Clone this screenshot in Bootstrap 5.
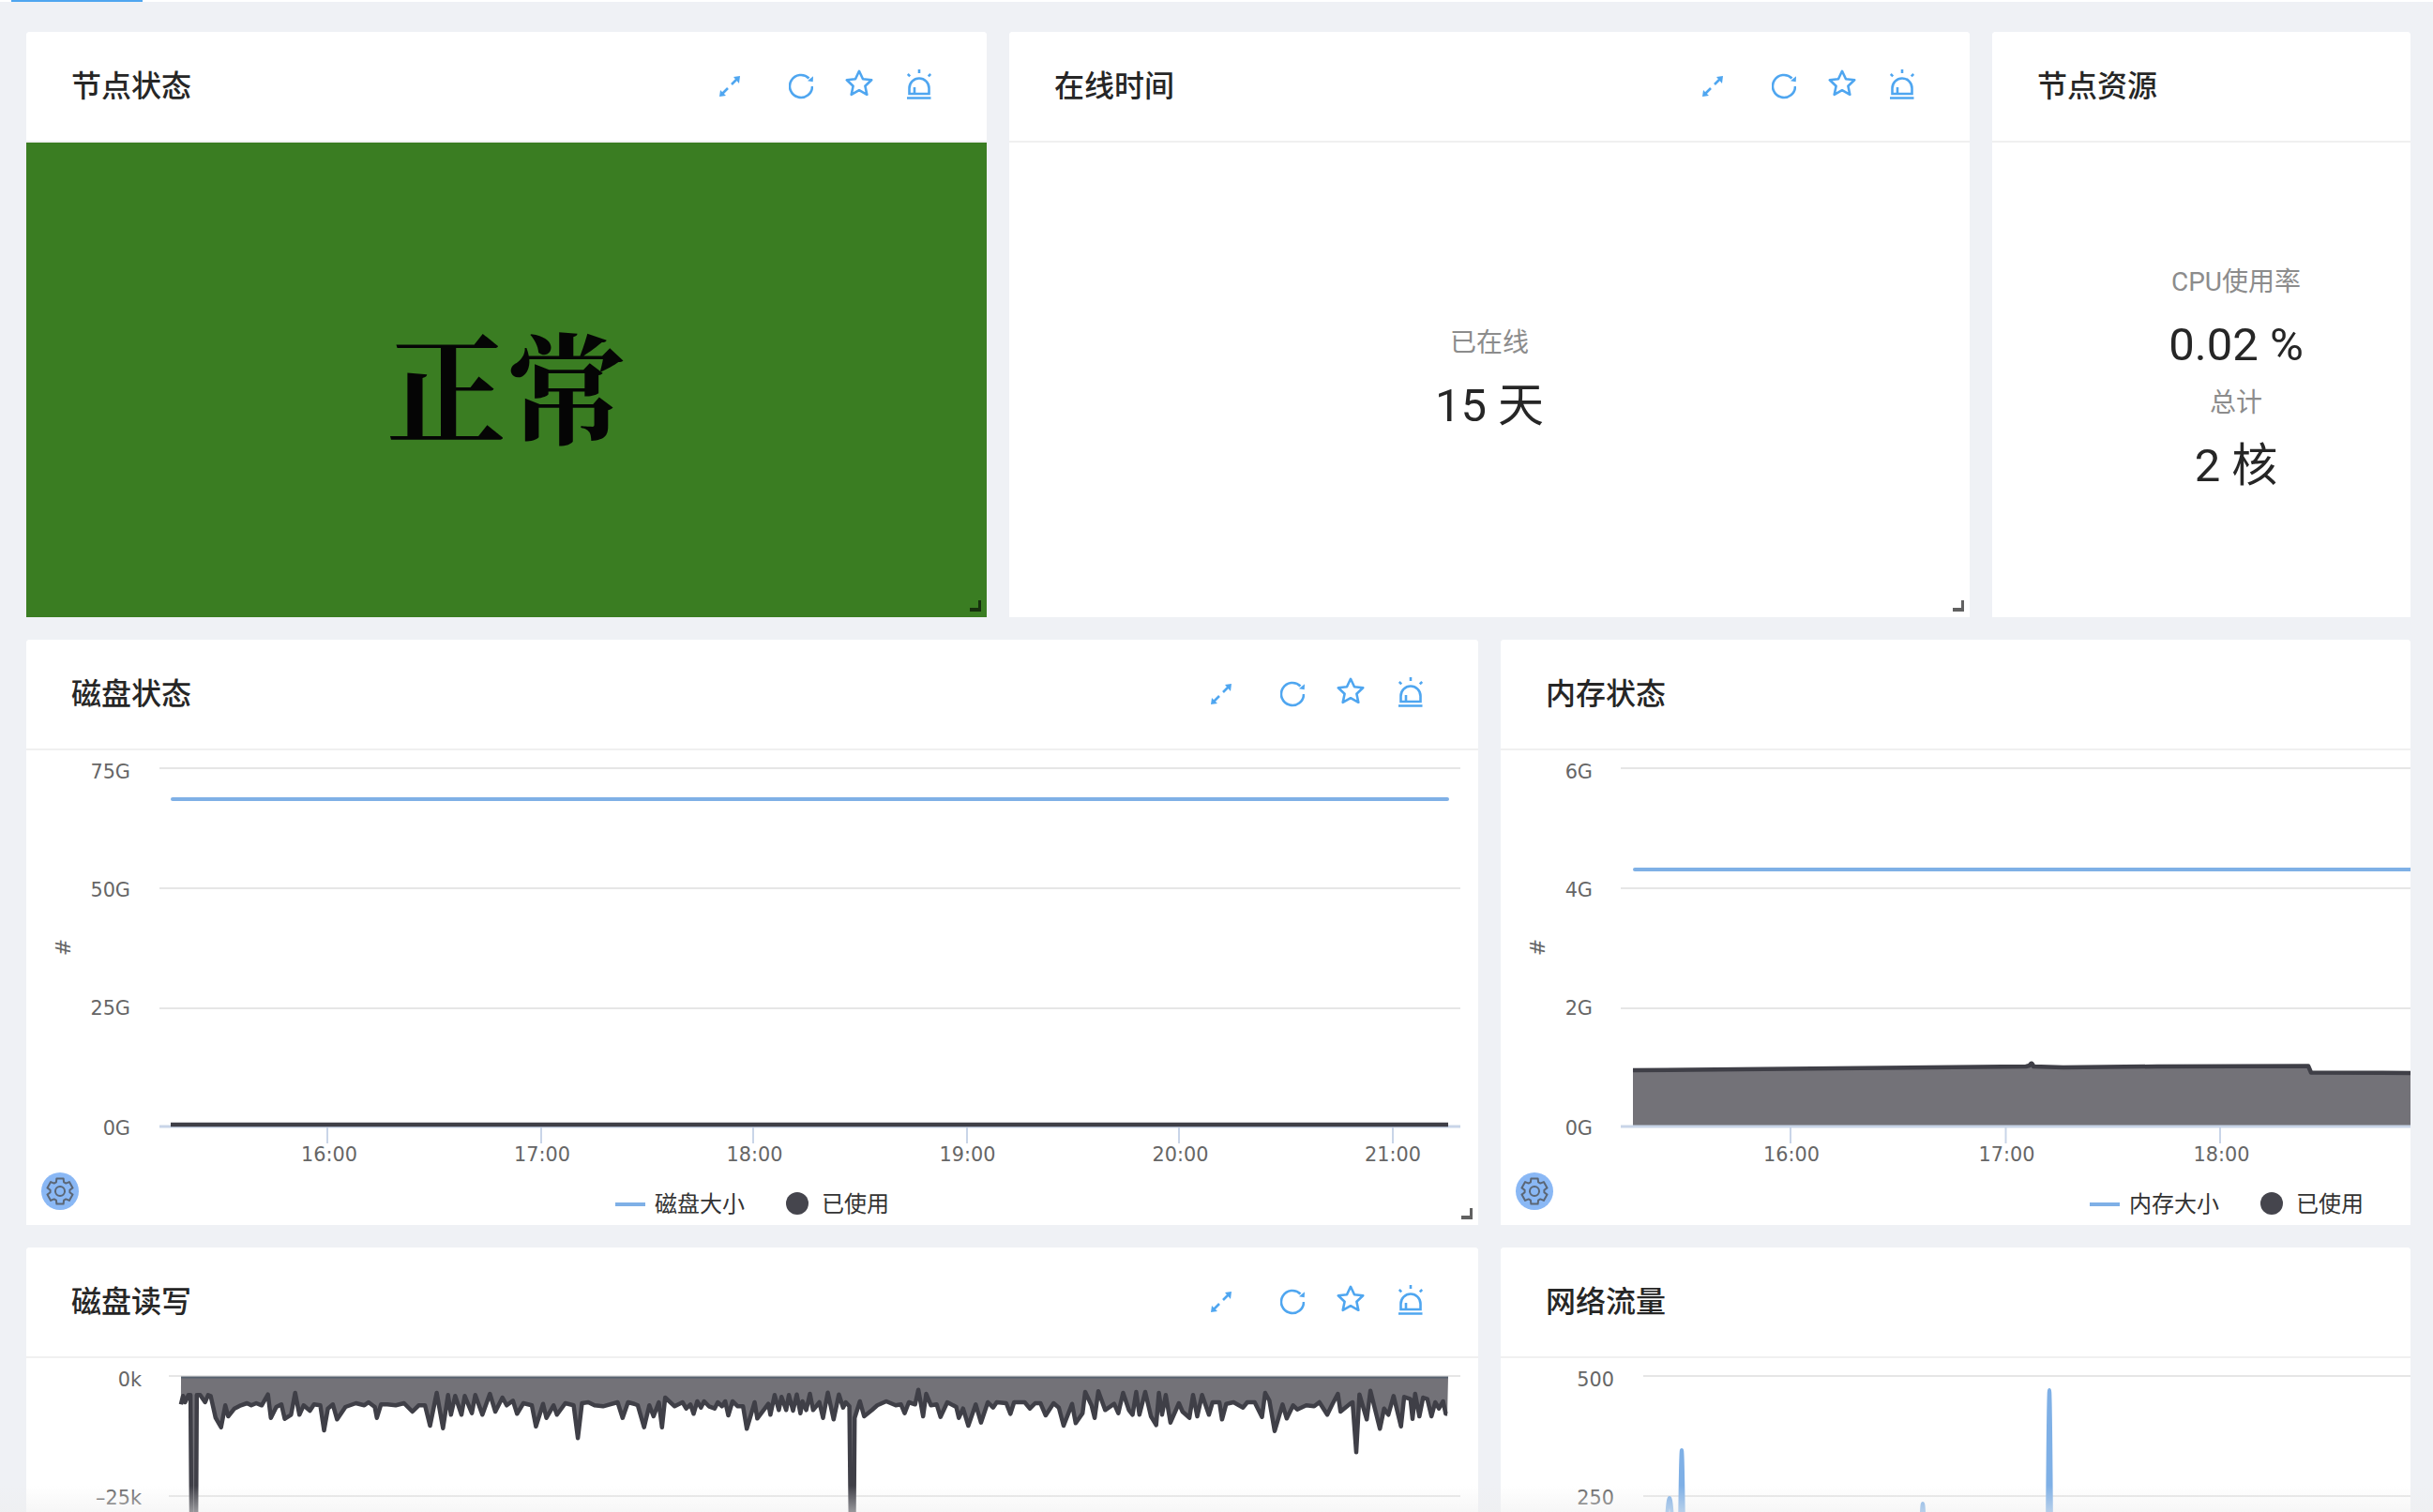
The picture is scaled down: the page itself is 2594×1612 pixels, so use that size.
<!DOCTYPE html>
<html lang="zh-CN">
<head>
    <meta charset="UTF-8">
    <meta name="viewport" content="width=device-width, initial-scale=1">
    <title>节点监控</title>
    <link href="https://cdn.jsdelivr.net/npm/bootstrap@5.3.0/dist/css/bootstrap.min.css" rel="stylesheet">
    <style>
        html, body {
            height: 100%;
            overflow: hidden;
        }

        body {
            background: #eff1f5;
            font-family: "Noto Sans CJK SC", sans-serif;
            color: #262626;
        }

        .top-strip {
            height: 2px;
            background: #fff;
        }

        .top-tab {
            width: 140px;
            height: 2px;
            margin-left: 12px;
            background: #4fa6f0;
        }

        .dash {
            padding: 32px 24px 0 28px;
            gap: 24px;
        }

        .dash-row {
            height: 624px;
            gap: 24px;
            flex: none;
        }

        .w-node { width: 1024px; }
        .w-res { width: 446px; }
        .w-disk { width: 1548px; }
        .w-mem { width: 970px; }

        .panel {
            --bs-card-border-radius: 4px 4px 0 0;
            --bs-card-inner-border-radius: 4px 4px 0 0;
            border: 0;
            overflow: hidden;
        }

        .panel-head {
            height: 118px;
            padding: 0 0 6px 48px;
            background: #fff;
            border-bottom: 2px solid #f0f0f0;
            flex: none;
        }

        .panel-title {
            font-size: 32px;
            font-weight: 500;
            color: #262626;
            margin: 0;
        }

        .tools {
            margin-right: 59px;
            margin-top: 2px;
        }

        .tools svg {
            height: 32px;
            display: block;
            fill: none;
            stroke: #4fa6f0;
            stroke-width: 2.6;
        }

        .tool-expand { width: 22px; margin-right: 52px; }
        .tool-refresh { width: 26px; margin-right: 34px; }
        .tool-star { width: 30px; margin-right: 36px; }
        .tool-alarm { width: 26px; }

        .status-ok {
            background: #3a7d22;
            color: #050505;
            font-family: "Noto Serif CJK SC", "Source Han Serif SC", "Liberation Serif", "Noto Sans CJK SC", serif;
            font-size: 128px;
            font-weight: 700;
            line-height: 1;
            padding-top: 8px;
        }

        .stat-body {
            padding-top: 6px;
        }

        .stat-body-res {
            padding-left: 74px;
        }

        .stat-label {
            font-family: Roboto, "Noto Sans CJK SC", sans-serif;
            font-size: 28px;
            line-height: 44px;
            color: #8c8c8c;
        }

        .stat-value {
            font-family: Roboto, "Noto Sans CJK SC", sans-serif;
            font-size: 49px;
            line-height: 80px;
            color: #262626;
        }

        .gap-label {
            margin-bottom: 5px;
        }

        .resize-mark {
            position: absolute;
            right: 6px;
            bottom: 6px;
            width: 12px;
            height: 12px;
            border-right: 3px solid rgba(0, 0, 0, .62);
            border-bottom: 4px solid rgba(0, 0, 0, .62);
        }

        .chart {
            display: block;
        }

        .chart text {
            font-family: "DejaVu Sans", sans-serif;
            font-size: 20.8px;
            fill: #666;
        }

        .chart .axis-name {
            font-size: 22px;
        }

        .chart .legend-text {
            font-family: "Noto Sans CJK SC", sans-serif;
            font-size: 24px;
            fill: #333;
        }

        .grid-line { stroke: #e6e6e6; stroke-width: 2; }
        .axis-line { stroke: #c9d5e8; stroke-width: 3; }
        .tick-line { stroke: #c9d5e8; stroke-width: 2; }
        .line-blue { stroke: #7fb0e6; stroke-width: 4; fill: none; stroke-linecap: round; stroke-linejoin: round; }
        .line-dark { stroke: #3f3f47; stroke-width: 4.5; fill: none; stroke-linejoin: round; }
        .area-dark { fill: #737278; }
        .gear-bg { fill: #8ab8f5; }
        .gear-line { fill: none; stroke: #5b6675; stroke-width: 2; stroke-linejoin: round; }

        .bottom-fade {
            position: absolute;
            left: 0;
            right: 0;
            bottom: 0;
            height: 28px;
            background: linear-gradient(rgba(238, 238, 238, 0), rgba(238, 238, 238, .5));
            pointer-events: none;
        }
    </style>
</head>
<body class="position-relative">

<svg width="0" height="0" class="position-absolute">
    <symbol id="i-expand" viewBox="0 -7 22 32">
        <path d="M13 9l6-6M9 13l-6 6"/>
        <path d="M22 0l-7 1 6 7zM0 22l1-7 6 6z" fill="#4fa6f0" stroke="none"/>
    </symbol>
    <symbol id="i-refresh" viewBox="0 -5 26 32">
        <path d="M25 13A12 12 0 1 1 21.5 4.5"/>
        <path d="M26 2.3l-.3 6-5.7-1z" fill="#4fa6f0" stroke="none"/>
    </symbol>
    <symbol id="i-star" viewBox="0 0 30 32">
        <path d="M15 1.8l4 8.4 9.2 1.1-6.8 6.4 1.9 9.1-8.300-4.600-8.300 4.600 1.900-9.100-6.800-6.400 9.200-1.100z" stroke-linejoin="round"/>
    </symbol>
    <symbol id="i-alarm" viewBox="0 0 26 32">
        <path d="M13 0v4M.8 5l2.400 2.400M25.200 5l-2.400 2.400M0 30.500h25.500"/>
        <path d="M2.500 26v-6a10.500 10.500 0 0 1 21 0v6zM8 19v7"/>
    </symbol>
</svg>

<div class="top-strip"><div class="top-tab"></div></div>

<div class="dash d-flex flex-column">

    <div class="dash-row d-flex">
        <div class="card panel w-node">
            <div class="panel-head d-flex align-items-center justify-content-between">
                <h5 class="panel-title">节点状态</h5>
                <div class="tools d-flex">
                    <svg class="tool-expand"><use href="#i-expand"/></svg>
                    <svg class="tool-refresh"><use href="#i-refresh"/></svg>
                    <svg class="tool-star"><use href="#i-star"/></svg>
                    <svg class="tool-alarm"><use href="#i-alarm"/></svg>
                </div>
            </div>
            <div class="status-ok flex-grow-1 d-flex align-items-center justify-content-center position-relative">
                正常
                <span class="resize-mark"></span>
            </div>
        </div>

        <div class="card panel w-node">
            <div class="panel-head d-flex align-items-center justify-content-between">
                <h5 class="panel-title">在线时间</h5>
                <div class="tools d-flex">
                    <svg class="tool-expand"><use href="#i-expand"/></svg>
                    <svg class="tool-refresh"><use href="#i-refresh"/></svg>
                    <svg class="tool-star"><use href="#i-star"/></svg>
                    <svg class="tool-alarm"><use href="#i-alarm"/></svg>
                </div>
            </div>
            <div class="stat-body flex-grow-1 d-flex flex-column align-items-center justify-content-center text-center position-relative">
                <div class="stat-label gap-label">已在线</div>
                <div class="stat-value">15 天</div>
                <span class="resize-mark"></span>
            </div>
        </div>

        <div class="card panel w-res">
            <div class="panel-head d-flex align-items-center">
                <h5 class="panel-title">节点资源</h5>
            </div>
            <div class="stat-body stat-body-res flex-grow-1 d-flex flex-column align-items-center justify-content-center text-center">
                <div class="stat-label gap-label">CPU使用率</div>
                <div class="stat-value">0.02 %</div>
                <div class="stat-label gap-label">总计</div>
                <div class="stat-value">2 核</div>
            </div>
        </div>
    </div>

    <div class="dash-row d-flex">
        <div class="card panel w-disk">
            <div class="panel-head d-flex align-items-center justify-content-between">
                <h5 class="panel-title">磁盘状态</h5>
                <div class="tools d-flex">
                    <svg class="tool-expand"><use href="#i-expand"/></svg>
                    <svg class="tool-refresh"><use href="#i-refresh"/></svg>
                    <svg class="tool-star"><use href="#i-star"/></svg>
                    <svg class="tool-alarm"><use href="#i-alarm"/></svg>
                </div>
            </div>
            <div class="flex-grow-1 position-relative">
                <svg class="chart" width="1548" height="506" viewBox="28 800 1548 506">
                    <path class="grid-line" d="M170 819H1557M170 947H1557M170 1075H1557"/>
                    <path class="axis-line" d="M170 1201H1557"/>
                    <path class="tick-line" d="M349 1201v18M577 1201v18M803 1201v18M1031 1201v18M1257 1201v18M1485 1201v18"/>
                    <text x="139" y="830" text-anchor="end">75G</text>
                    <text x="139" y="956" text-anchor="end">50G</text>
                    <text x="139" y="1082" text-anchor="end">25G</text>
                    <text x="139" y="1210" text-anchor="end">0G</text>
                    <text class="axis-name" transform="translate(67 1010) rotate(-90)" y="8" text-anchor="middle">#</text>
                    <text x="351" y="1238" text-anchor="middle">16:00</text>
                    <text x="578" y="1238" text-anchor="middle">17:00</text>
                    <text x="804.500" y="1238" text-anchor="middle">18:00</text>
                    <text x="1031.500" y="1238" text-anchor="middle">19:00</text>
                    <text x="1258.500" y="1238" text-anchor="middle">20:00</text>
                    <text x="1485" y="1238" text-anchor="middle">21:00</text>
                    <path class="line-blue" d="M184 852H1543"/>
                    <path class="line-dark" stroke-width="2.500" d="M182 1199H1544"/>
                    <circle class="gear-bg" cx="64" cy="1270" r="20"/>
                    <path class="gear-line js-gear" transform="translate(64 1270)"/>
                    <circle class="gear-line" cx="64" cy="1270" r="5"/>
                    <path d="M656 1284H688" stroke="#7fb0e6" stroke-width="4"/>
                    <text class="legend-text" x="698" y="1292">磁盘大小</text>
                    <circle cx="850" cy="1283" r="12" fill="#45454d"/>
                    <text class="legend-text" x="876" y="1292">已使用</text>
                </svg>
                <span class="resize-mark"></span>
            </div>
        </div>

        <div class="card panel w-mem">
            <div class="panel-head d-flex align-items-center">
                <h5 class="panel-title">内存状态</h5>
            </div>
            <div class="flex-grow-1">
                <svg class="chart" width="970" height="506" viewBox="1600 800 970 506">
                    <path class="grid-line" d="M1728 819H2570M1728 947H2570M1728 1075H2570"/>
                    <path class="area-dark" d="M1741 1141L2160 1137L2164 1136Q2166 1131 2168 1137L2200 1138L2300 1137L2461 1136.500L2464 1143.500L2570 1144V1201H1741Z"/>
                    <path class="line-dark" d="M1741 1141L2160 1137L2164 1136Q2166 1131 2168 1137L2200 1138L2300 1137L2461 1136.500L2464 1143.500L2570 1144"/>
                    <path class="axis-line" d="M1728 1201H2570"/>
                    <path class="tick-line" d="M1909 1201v18M2138.500 1201v18M2367 1201v18"/>
                    <text x="1698" y="830" text-anchor="end">6G</text>
                    <text x="1698" y="956" text-anchor="end">4G</text>
                    <text x="1698" y="1082" text-anchor="end">2G</text>
                    <text x="1698" y="1210" text-anchor="end">0G</text>
                    <text class="axis-name" transform="translate(1639 1010) rotate(-90)" y="8" text-anchor="middle">#</text>
                    <text x="1910" y="1238" text-anchor="middle">16:00</text>
                    <text x="2139.500" y="1238" text-anchor="middle">17:00</text>
                    <text x="2368.500" y="1238" text-anchor="middle">18:00</text>
                    <path class="line-blue" d="M1743 927H2572"/>
                    <circle class="gear-bg" cx="1636" cy="1270" r="20"/>
                    <path class="gear-line js-gear" transform="translate(1636 1270)"/>
                    <circle class="gear-line" cx="1636" cy="1270" r="5"/>
                    <path d="M2228 1284H2260" stroke="#7fb0e6" stroke-width="4"/>
                    <text class="legend-text" x="2270" y="1292">内存大小</text>
                    <circle cx="2422" cy="1283" r="12" fill="#45454d"/>
                    <text class="legend-text" x="2448" y="1292">已使用</text>
                </svg>
            </div>
        </div>
    </div>

    <div class="dash-row d-flex">
        <div class="card panel w-disk">
            <div class="panel-head d-flex align-items-center justify-content-between">
                <h5 class="panel-title">磁盘读写</h5>
                <div class="tools d-flex">
                    <svg class="tool-expand"><use href="#i-expand"/></svg>
                    <svg class="tool-refresh"><use href="#i-refresh"/></svg>
                    <svg class="tool-star"><use href="#i-star"/></svg>
                    <svg class="tool-alarm"><use href="#i-alarm"/></svg>
                </div>
            </div>
            <div class="flex-grow-1">
                <svg class="chart" width="1548" height="506" viewBox="28 1448 1548 506">
                    <path class="grid-line" d="M180 1467H1557M180 1595H1557"/>
                    <path class="area-dark" id="ioArea"/>
                    <path class="line-dark" id="ioLine"/>
                    <path d="M193 1468.500H1544" stroke="#56606e" stroke-width="2"/>
                    <text x="151" y="1478" text-anchor="end">0k</text>
                    <text x="151" y="1604" text-anchor="end">–25k</text>
                </svg>
            </div>
        </div>

        <div class="card panel w-mem">
            <div class="panel-head d-flex align-items-center">
                <h5 class="panel-title">网络流量</h5>
            </div>
            <div class="flex-grow-1">
                <svg class="chart" width="970" height="506" viewBox="1600 1448 970 506">
                    <path class="grid-line" d="M1752 1467H2570M1752 1595H2570"/>
                    <path class="line-blue" d="M1776 1640Q1778 1597 1780 1597Q1782 1597 1784 1640"/>
                    <path class="line-blue" d="M1791 1640Q1792 1546 1793 1546Q1794 1546 1795 1640"/>
                    <path class="line-blue" d="M2048 1640Q2049 1603 2050 1603Q2051 1603 2052 1640"/>
                    <path class="line-blue" d="M2183 1640Q2184 1482 2185 1482Q2186 1482 2187 1640"/>
                    <text x="1721" y="1478" text-anchor="end">500</text>
                    <text x="1721" y="1604" text-anchor="end">250</text>
                </svg>
            </div>
        </div>
    </div>
</div>

<div class="bottom-fade"></div>

<script>
    // read/write curve, traced in two stretches
    const ioLeft = [[432,292],[437,265],[442,285],[450,262],[455,262],[459,1000],[463,1000],[467,1000],[470,262],[478,262],[490,285],[497,262],[503,265],[515,335],[528,365],[538,295],[545,330],[560,305],[575,295],[590,288],[600,295],[612,288],[625,295],[640,260],[647,335],[660,300],[672,292],[680,338],[695,325],[705,255],[715,325],[725,295],[740,312],[750,292],[765,295],[774,375],[783,305],[795,292],[805,340],[825,300],[850,288],[870,295],[880,285],[895,300],[900,335],[910,292],[925,292],[945,295],[965,288],[985,315],[1000,295],[1015,295],[1027,360],[1043,255],[1058,368],[1070,262],[1077,325],[1087,265],[1102,325],[1110,265],[1127,320],[1135,262],[1152,325],[1170,258],[1183,315],[1200,270],[1210,295],[1225,280],[1235,322],[1250,288],[1270,295],[1280,362],[1297,290],[1305,335],[1322,295],[1330,325],[1350,288],[1370,295],[1380,400],[1390,288],[1405,285],[1420,295],[1440,298],[1475,285],[1487,335],[1500,285],[1515,290]];
    const ioRight = [[0,115],[12,185],[22,115],[30,150],[40,105],[46,185],[52,90],[70,118],[85,105],[92,125],[100,112],[106,142],[113,102],[120,122],[126,102],[135,118],[146,125],[152,105],[160,118],[166,102],[172,147],[180,102],[190,118],[200,118],[207,190],[222,105],[227,157],[248,110],[252,145],[260,82],[268,130],[273,88],[282,130],[287,82],[295,132],[302,80],[309,140],[313,102],[320,130],[327,78],[333,130],[345,105],[352,155],[361,74],[372,160],[382,80],[390,122],[395,105],[402,118],[405,600],[407,600],[410,600],[412,155],[422,102],[430,150],[445,130],[455,115],[472,102],[490,115],[500,112],[507,140],[515,105],[527,112],[533,65],[542,150],[548,78],[557,115],[568,112],[575,152],[588,105],[605,120],[610,155],[618,125],[628,180],[642,112],[652,170],[665,105],[675,122],[682,105],[700,108],[708,142],[715,105],[735,105],[745,125],[755,108],[765,108],[775,147],[790,108],[800,122],[809,180],[825,110],[832,172],[845,140],[850,72],[862,115],[868,155],[875,70],[888,130],[905,110],[913,140],[922,75],[933,130],[940,145],[947,72],[953,145],[964,72],[975,150],[985,178],[990,75],[996,145],[1003,82],[1012,170],[1028,108],[1035,135],[1048,155],[1055,82],[1063,150],[1072,82],[1085,145],[1092,105],[1105,105],[1110,160],[1118,110],[1132,105],[1150,122],[1158,105],[1172,105],[1186,152],[1192,75],[1200,100],[1210,197],[1225,112],[1233,157],[1245,115],[1253,128],[1270,115],[1285,118],[1295,105],[1310,145],[1320,110],[1330,78],[1335,135],[1353,110],[1358,105],[1365,265],[1371,80],[1385,160],[1392,68],[1410,190],[1418,125],[1426,145],[1436,85],[1450,182],[1456,88],[1468,95],[1472,158],[1477,78],[1485,150],[1492,90],[1500,95],[1508,150],[1515,105],[1522,125],[1530,102],[1535,142],[1538,142]];

    const ioPoints = ioLeft.map(p => [p[0] / 2.24, 1400 + p[1] / 3])
        .concat(ioRight.map(p => [680 + p[0] / 1.782, 1460 + p[1] / 3]));
    const ioPath = 'M' + ioPoints.map(p => p[0].toFixed(1) + ' ' + p[1].toFixed(1)).join('L');
    document.getElementById('ioLine').setAttribute('d', ioPath);
    document.getElementById('ioArea').setAttribute('d', ioPath + 'L1544 1468L193 1468Z');

    // six lobed settings gear, centred on 0,0
    function gearPath() {
        let d = '';
        for (let k = 0; k < 6; k++) {
            const a = -90 + k * 60;
            [[a - 15, 14], [a + 15, 14], [a + 23, 10.5], [a + 37, 10.5]].forEach(p => {
                const r = p[0] * Math.PI / 180;
                d += (d ? 'L' : 'M') + (p[1] * Math.cos(r)).toFixed(2) + ' ' + (p[1] * Math.sin(r)).toFixed(2);
            });
        }
        return d + 'Z';
    }
    document.querySelectorAll('.js-gear').forEach(el => el.setAttribute('d', gearPath()));
</script>

<script src="https://cdn.jsdelivr.net/npm/bootstrap@5.3.0/dist/js/bootstrap.bundle.min.js"></script>
</body>
</html>
